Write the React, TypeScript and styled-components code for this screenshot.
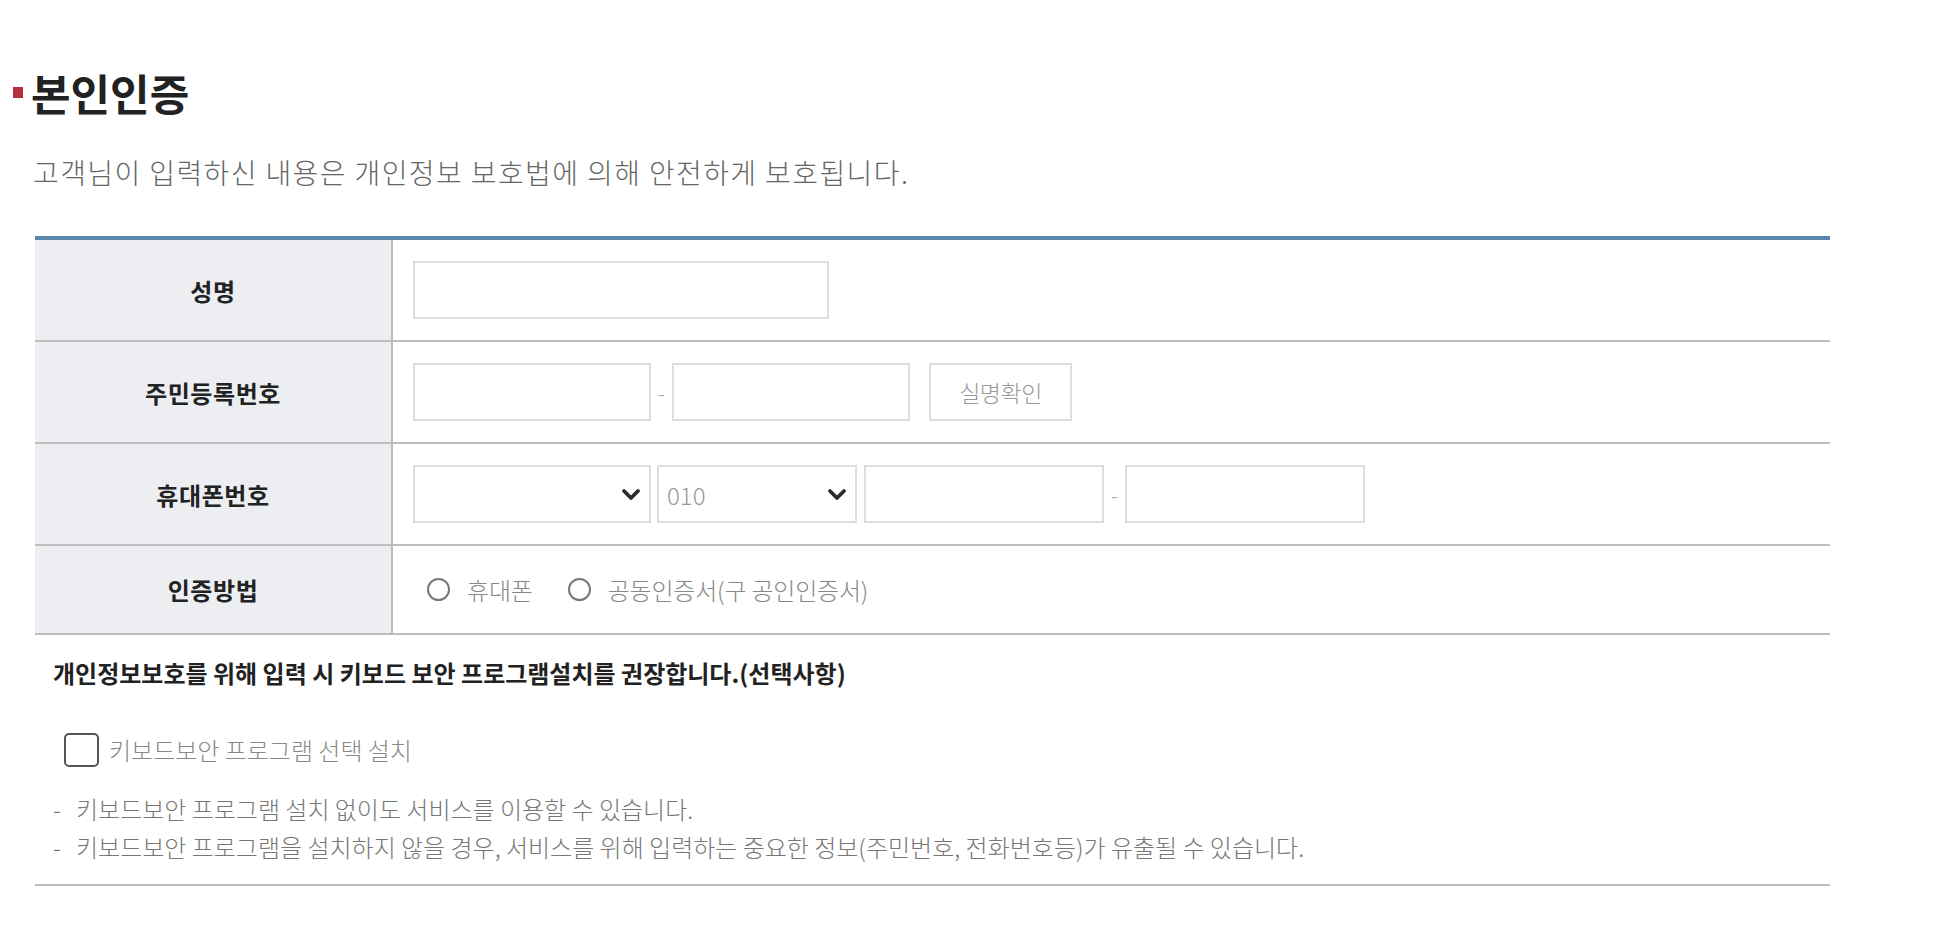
import React from 'react';
import styled, { createGlobalStyle } from 'styled-components';

const GlobalStyle = createGlobalStyle`
  body {
    margin: 0;
    background: #fff;
    font-family: "Noto Sans CJK KR", "Noto Sans", sans-serif;
  }
`;

const Page = styled.div`
  width: 1936px;
  box-sizing: border-box;
  padding: 68px 106px 0 35px;
`;

const Title = styled.h2`
  display: flex;
  align-items: center;
  gap: 8px;
  margin: 0 0 0 -22px;
  font-size: 43px;
  line-height: 48px;
  font-weight: 700;
  color: #222;

  &::before {
    content: '';
    width: 10px;
    height: 11px;
    background: #b3303c;
  }
`;

const Subtitle = styled.p`
  margin: 41px 0 0 -2px;
  font-size: 28px;
  line-height: 30px;
  font-weight: 300;
  color: #666;
  letter-spacing: 1.4px;
`;

const Table = styled.div`
  margin-top: 49px;
  border-top: 4px solid #5a86ad;
`;

const Row = styled.div<{ $h: number }>`
  display: grid;
  grid-template-columns: 358px 1fr;
  height: ${(p) => p.$h}px;
  box-sizing: border-box;
  border-bottom: 2px solid #bdbdbd;
`;

const Label = styled.div`
  display: flex;
  align-items: center;
  justify-content: center;
  background: #eceef2;
  border-right: 2px solid #bdbdbd;
  font-size: 24px;
  font-weight: 700;
  color: #222;
  letter-spacing: 0.6px;
`;

const Cell = styled.div`
  display: flex;
  align-items: center;
  padding-left: 20px;
`;

const Field = styled.input<{ $w: number }>`
  width: ${(p) => p.$w}px;
  height: 58px;
  box-sizing: border-box;
  border: 2px solid #dedede;
  background: #fff;
  outline: none;
  padding: 0 14px;
  font-family: inherit;
  font-size: 22px;
`;

const Dash = styled.span`
  width: 21px;
  text-align: center;
  font-size: 22px;
  font-weight: 300;
  color: #aaa;
`;

const CheckButton = styled.button`
  width: 143px;
  height: 58px;
  margin-left: 19px;
  box-sizing: border-box;
  border: 2px solid #dedede;
  background: #fff;
  font-family: inherit;
  font-size: 23px;
  font-weight: 300;
  color: #999;
  letter-spacing: -0.5px;
`;

const SelectBox = styled.div<{ $w: number; $gap: number }>`
  display: flex;
  align-items: center;
  justify-content: space-between;
  width: ${(p) => p.$w}px;
  height: 58px;
  margin-right: ${(p) => p.$gap}px;
  box-sizing: border-box;
  border: 2px solid #dedede;
  padding: 0 8px;
  font-size: 24px;
  font-weight: 300;
  color: #999;
`;

const Radio = styled.label`
  display: flex;
  align-items: center;
  gap: 17px;
  margin-right: 35px;
  margin-left: 14px;
  font-size: 24px;
  font-weight: 300;
  color: #888;
  letter-spacing: -0.2px;

  & + & {
    margin-left: 0;
  }
`;

const Circle = styled.span`
  width: 23px;
  height: 23px;
  box-sizing: border-box;
  border: 2px solid #777;
  border-radius: 50%;
`;

const Notice = styled.p`
  margin: 22px 0 0 18px;
  font-size: 24px;
  line-height: 32px;
  font-weight: 700;
  color: #222;
`;

const CheckRow = styled.label`
  display: flex;
  align-items: center;
  gap: 10px;
  margin: 43px 0 0 29px;
  font-size: 24px;
  font-weight: 300;
  color: #888;
`;

const Box = styled.span`
  width: 35px;
  height: 34px;
  box-sizing: border-box;
  border: 2px solid #555;
  border-radius: 5px;
`;

const Bullets = styled.ul`
  list-style: none;
  margin: 23px 0 0 18px;
  padding: 0;
`;

const Bullet = styled.li`
  display: flex;
  gap: 15px;
  font-size: 24px;
  line-height: 38px;
  font-weight: 300;
  color: #777;
`;

const Bottom = styled.div`
  margin-top: 18px;
  border-top: 2px solid #bdbdbd;
`;

const Chevron = () => (
  <svg width="20" height="13" viewBox="0 0 20 13">
    <polyline points="3,3 10,10 17,3" fill="none" stroke="#2b2b2b" strokeWidth="3.8" strokeLinecap="round" strokeLinejoin="round" />
  </svg>
);

export default function App() {
  return (
    <Page>
      <GlobalStyle />
      <Title>본인인증</Title>
      <Subtitle>고객님이 입력하신 내용은 개인정보 보호법에 의해 안전하게 보호됩니다.</Subtitle>

      <Table>
        <Row $h={102}>
          <Label>성명</Label>
          <Cell>
            <Field $w={416} />
          </Cell>
        </Row>
        <Row $h={102}>
          <Label>주민등록번호</Label>
          <Cell>
            <Field $w={238} />
            <Dash>-</Dash>
            <Field $w={238} />
            <CheckButton>실명확인</CheckButton>
          </Cell>
        </Row>
        <Row $h={102}>
          <Label>휴대폰번호</Label>
          <Cell>
            <SelectBox $w={238} $gap={6}>
              <span />
              <Chevron />
            </SelectBox>
            <SelectBox $w={200} $gap={7}>
              <span>010</span>
              <Chevron />
            </SelectBox>
            <Field $w={240} />
            <Dash>-</Dash>
            <Field $w={240} />
          </Cell>
        </Row>
        <Row $h={89}>
          <Label>인증방법</Label>
          <Cell>
            <Radio>
              <Circle />
              휴대폰
            </Radio>
            <Radio>
              <Circle />
              공동인증서(구 공인인증서)
            </Radio>
          </Cell>
        </Row>
      </Table>

      <Notice>개인정보보호를 위해 입력 시 키보드 보안 프로그램설치를 권장합니다.(선택사항)</Notice>
      <CheckRow>
        <Box />
        키보드보안 프로그램 선택 설치
      </CheckRow>
      <Bullets>
        <Bullet>
          <span>-</span>
          <span>키보드보안 프로그램 설치 없이도 서비스를 이용할 수 있습니다.</span>
        </Bullet>
        <Bullet>
          <span>-</span>
          <span>키보드보안 프로그램을 설치하지 않을 경우, 서비스를 위해 입력하는 중요한 정보(주민번호, 전화번호등)가 유출될 수 있습니다.</span>
        </Bullet>
      </Bullets>
      <Bottom />
    </Page>
  );
}
